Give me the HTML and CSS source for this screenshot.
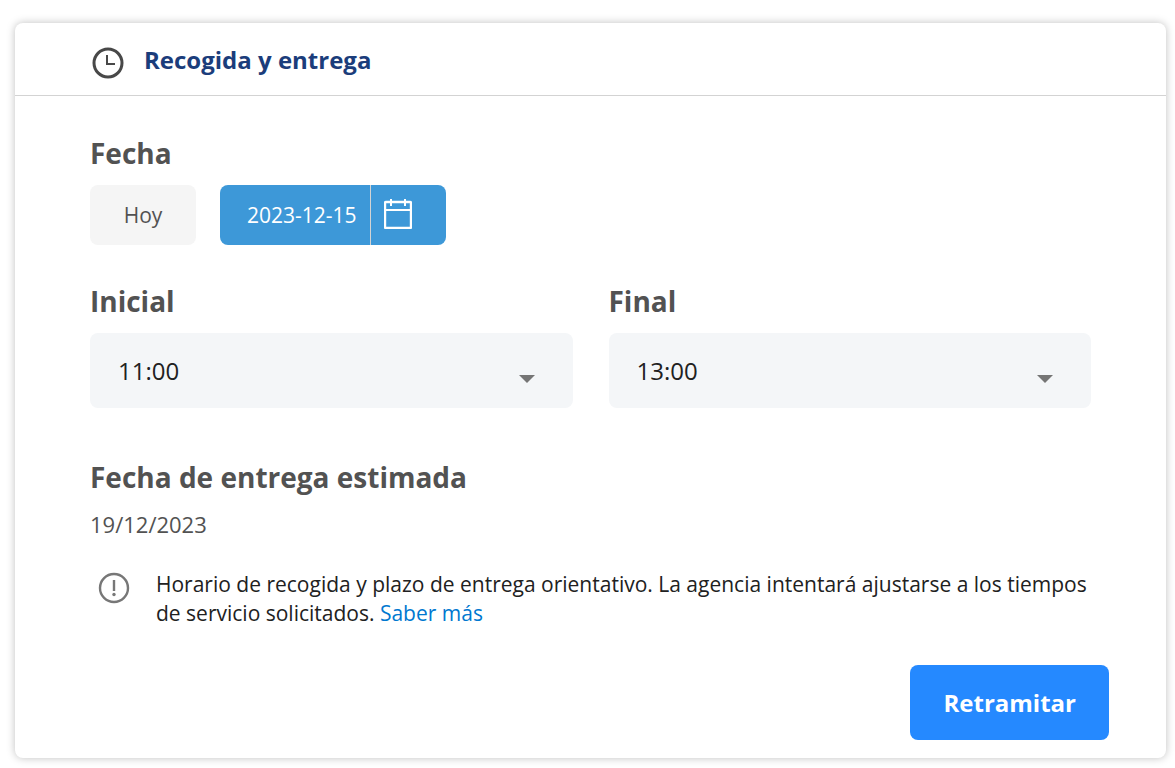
FILE: index.html
```
<!DOCTYPE html>
<html lang="es">
  <head>
    <meta charset="UTF-8" />
    <meta name="viewport" content="width=device-width, initial-scale=1.0" />
    <title>Recogida y entrega</title>
    <link rel="stylesheet" href="styles.css">
  </head>
  <body>
    <section class="card">
      <header class="card-header">
        <svg class="icon" width="32" height="32" viewBox="0 0 32 32" fill="none" stroke="#484848" aria-hidden="true">
          <circle cx="16" cy="16" r="14" stroke-width="3" />
          <path d="M15 8v9h8" stroke-width="2" />
        </svg>
        <h1>Recogida y entrega</h1>
      </header>

      <form class="card-body">
        <div class="content">
          <label class="label" for="date">Fecha</label>
          <div class="dates">
            <button type="button" class="today">Hoy</button>
            <div class="date-picker">
              <input type="text" id="date" value="2023-12-15" />
              <button type="button" class="calendar" aria-label="Abrir calendario">
                <svg width="28" height="30" viewBox="0 0 28 30" fill="none" stroke="#fff" stroke-width="2" aria-hidden="true">
                  <rect x="1" y="3" width="26" height="26" rx="1" stroke-width="2.400" />
                  <path d="M1 11h26M7 0v7M21 0v7" />
                </svg>
              </button>
            </div>
          </div>

          <div class="hours">
            <div class="field">
              <label class="label" for="start">Inicial</label>
              <div class="select">
                <select id="start">
                  <option>11:00</option>
                  <option>12:00</option>
                </select>
              </div>
            </div>
            <div class="field">
              <label class="label" for="end">Final</label>
              <div class="select">
                <select id="end">
                  <option>13:00</option>
                  <option>14:00</option>
                </select>
              </div>
            </div>
          </div>

          <h2 class="label">Fecha de entrega estimada</h2>
          <p class="estimated">19/12/2023</p>

          <div class="notice">
            <svg class="icon" width="32" height="32" viewBox="0 0 32 32" fill="none" stroke="#777" stroke-width="2.400" aria-hidden="true">
              <circle cx="16" cy="16" r="14" />
              <path d="M16 8v11" />
              <circle cx="16" cy="22.500" r="1.700" fill="#777" stroke="none" />
            </svg>
            <p>
              Horario de recogida y plazo de entrega orientativo. La agencia
              intentará ajustarse a los tiempos de servicio solicitados.
              <a href="#">Saber más</a>
            </p>
          </div>
        </div>

        <div class="actions">
          <button type="submit" class="submit">Retramitar</button>
        </div>
      </form>
    </section>
  </body>
</html>
```

FILE: styles.css
```
* {
  box-sizing: border-box;
}
body {
  margin: 0;
  padding: 23px 9px 10px 15px;
  background-color: white;
  color: #212121;
  font-family: "Open Sans", sans-serif;
  font-size: 21px;
}
h1,
h2,
p {
  margin: 0;
}
button,
input,
select {
  font-family: inherit;
  border: none;
}
button {
  cursor: pointer;
}
.icon {
  flex: none;
}
.card {
  background-color: white;
  border-radius: 8px;
  box-shadow: 0 0 8px rgba(0, 0, 0, 0.25);
}
.card-header {
  display: flex;
  align-items: center;
  gap: 20px;
  padding: 16px 77px 15px;
  border-bottom: 1px solid #d3d3d3;
}
.card-header .icon {
  margin-top: 7px;
}
.card-header h1 {
  color: #1b3d7b;
  font-size: 24px;
  line-height: 41px;
}
.card-body {
  padding: 38px 57px 18px 75px;
}
.content {
  margin-right: 18px;
}
.label {
  display: block;
  color: #525252;
  font-size: 28px;
  font-weight: bold;
  line-height: 38px;
}
.dates {
  display: flex;
  gap: 24px;
  margin: 13px 0 37px;
}
.today {
  width: 106px;
  height: 60px;
  border-radius: 8px;
  background-color: #f5f5f5;
  color: #525252;
  font-size: 21px;
}
.date-picker {
  display: flex;
  height: 60px;
  overflow: hidden;
  border-radius: 8px;
  background-color: #3d98d8;
}
.date-picker input {
  width: 150px;
  padding: 0 0 0 27px;
  background: none;
  color: white;
  font-size: 21px;
}
.calendar {
  display: flex;
  align-items: center;
  width: 76px;
  padding: 0 0 2px 13px;
  border-left: 1px solid #d3d3d3;
  background: none;
}
.hours {
  display: grid;
  grid-template-columns: 1fr 1fr;
  gap: 36px;
  margin-bottom: 50px;
}
.select {
  position: relative;
  margin-top: 13px;
}
.select select {
  display: block;
  width: 100%;
  height: 75px;
  padding: 0 60px 0 28px;
  border-radius: 8px;
  background-color: #f4f6f8;
  color: #212121;
  font-size: 24px;
  appearance: none;
}
/* dropdown arrow */
.select::after {
  content: "";
  position: absolute;
  top: 42px;
  right: 38px;
  border: 8px solid transparent;
  border-top-color: #757575;
  border-bottom: none;
  pointer-events: none;
}
.estimated {
  margin-top: 13px;
  color: #525252;
  font-size: 22px;
  line-height: 30px;
}
.notice {
  display: flex;
  gap: 26px;
  margin-top: 31px;
  padding-left: 8px;
}
.notice .icon {
  margin-top: 2px;
}
.notice p {
  line-height: 29px;
}
.notice a {
  color: #0078d0;
  text-decoration: none;
}
.actions {
  display: flex;
  justify-content: flex-end;
  margin-top: 37px;
}
.submit {
  height: 75px;
  padding: 0 33px;
  border-radius: 8px;
  background-color: #2589ff;
  color: white;
  font-size: 24px;
  font-weight: bold;
}
```
